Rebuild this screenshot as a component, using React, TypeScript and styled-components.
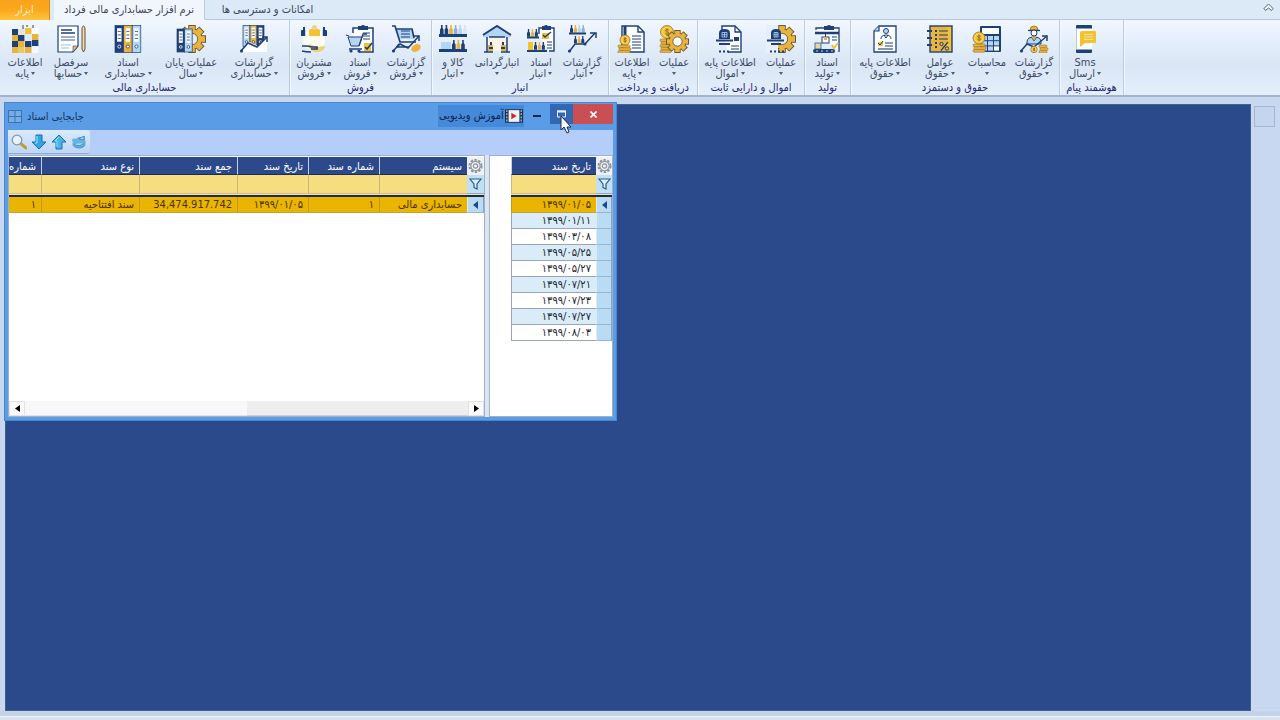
import React from 'react';
import styled, { createGlobalStyle } from 'styled-components';

const N = '#1f3f78';
const Y = '#e9b33c';
const G = '#f2c230';
const L = '#b4d6f5';
const W = '#fdfeff';

const GlobalStyle = createGlobalStyle`
  * { box-sizing: border-box; }
  body { margin: 0; }
  button, input { font: inherit; color: inherit; }
`;

const Page = styled.div`
  min-height: 100vh;
  display: flex;
  flex-direction: column;
  position: relative;
  overflow: hidden;
  background: #c8d8f0;
  font-family: 'DejaVu Sans Condensed', 'DejaVu Sans', sans-serif;
  font-size: 11px;
  line-height: 12px;
  color: #3a4b66;
`;

const TabStrip = styled.nav`
  height: 20px;
  display: flex;
  align-items: stretch;
  background: #dce9f7;
`;

const ToolsButton = styled.button`
  width: 50px;
  border: 0;
  border-right: 1px solid #d98a14;
  padding: 0;
  background: linear-gradient(#f9a31a, #fba81c 50%, #ffc53c);
  color: #fff1d2;
`;

const Tab = styled.button<{ $active?: boolean; $width: number }>`
  width: ${(p) => p.$width}px;
  margin-left: ${(p) => (p.$active ? 4 : 0)}px;
  border: 0;
  padding: 0;
  white-space: nowrap;
  color: #3b4660;
  background: ${(p) => (p.$active ? '#f1f6fd' : 'transparent')};
  border-right: 1px solid ${(p) => (p.$active ? '#b9cade' : 'transparent')};
  border-bottom: 1px solid ${(p) => (p.$active ? 'transparent' : '#b6c8dd')};
`;

const StripFill = styled.div`
  flex: 1;
  display: flex;
  justify-content: flex-end;
  align-items: flex-start;
  padding: 3px 6px 0 0;
  border-bottom: 1px solid #b6c8dd;
`;

const PlainButton = styled.button`
  border: 0;
  padding: 0;
  background: none;
  display: flex;
  align-items: center;
  justify-content: center;
`;

const Ribbon = styled.div`
  height: 77px;
  display: flex;
  align-items: stretch;
  background: linear-gradient(#f1f7fe, #e2edfa 35%, #dae6f5 60%, #e4effb);
  border-bottom: 2px solid #a4b4c9;
`;

const Group = styled.section<{ $width: number }>`
  width: ${(p) => p.$width}px;
  flex: none;
  display: flex;
  flex-direction: column;
  border-right: 1px solid #bccbdd;
  box-shadow: 1px 0 #f3f8fe;
`;

const GroupItems = styled.div<{ $inset: number }>`
  display: flex;
  padding: 5px 0 0 ${(p) => p.$inset}px;
  height: 62px;
`;

const GroupTitle = styled.h2`
  margin: 0;
  font-size: 11px;
  line-height: 12px;
  font-weight: 400;
  text-align: center;
  white-space: nowrap;
  color: #24227c;
`;

const Item = styled.button<{ $width: number }>`
  width: ${(p) => p.$width}px;
  flex: none;
  display: flex;
  flex-direction: column;
  align-items: center;
  justify-content: flex-start;
  border: 0;
  padding: 0;
  background: none;
  white-space: nowrap;
  line-height: 11px;
`;

const ItemIcon = styled.svg`
  width: 30px;
  height: 28px;
  margin-bottom: 4px;
`;

const SecondLine = styled.span`
  display: flex;
  align-items: center;
  height: 11px;
  gap: 2px;
`;

const Caret = styled.span`
  border: 2px solid transparent;
  border-top: 3px solid #4c5d78;
  border-bottom: 0;
`;

const Body = styled.main`
  flex: 1;
  display: flex;
  gap: 3px;
  padding: 7px 5px 0 5px;
  background: #c8d8f1;
`;

const Workspace = styled.div`
  flex: 1;
  background: #2b4a8c;
  border: 1px solid #43618f;
`;

const SideRail = styled.aside`
  width: 21px;
  padding-top: 2px;
`;

const RailButton = styled.button`
  width: 21px;
  height: 21px;
  border: 1px solid #a4b6d4;
  background: #c5d5f0;
  padding: 0;
  display: block;
`;

const StatusBar = styled.footer`
  height: 9px;
  border-top: 5px solid #c4d3e8;
  background: #d9e3ef;
  box-shadow: inset 0 1px #edf3fa;
`;

const Window = styled.section`
  position: absolute;
  left: 4px;
  top: 102px;
  width: 613px;
  border: 1px solid #4a86cf;
  padding: 1px 3px 3px;
  background: #5a9de6;
  color: #14284c;
`;

const TitleBar = styled.header`
  height: 26px;
  display: flex;
  align-items: flex-start;
`;

const WindowName = styled.h1`
  flex: 1;
  display: flex;
  align-items: center;
  gap: 5px;
  margin: 0;
  height: 26px;
  font-size: 11px;
  font-weight: 400;
  color: #16365f;
`;

const VideoButton = styled.button`
  height: 22px;
  width: 86px;
  display: flex;
  align-items: center;
  justify-content: space-between;
  border: 0;
  padding: 0 1px;
  margin-top: 1px;
  background: #4589da;
  color: #10214a;
  white-space: nowrap;
`;

const WindowButton = styled(PlainButton)<{ $width: number; $bg: string }>`
  width: ${(p) => p.$width}px;
  height: 20px;
  background: ${(p) => p.$bg};
`;

const ToolBar = styled.div`
  height: 25px;
  display: flex;
  background: #b5cdfa;
`;

const ToolButtons = styled.div`
  display: flex;
  height: 24px;
  align-items: center;
  padding: 0 1px;
  border-bottom: 1px solid #8fa9d0;
  border-radius: 0 3px 3px 0;
  background: linear-gradient(#dceafc, #bdd6f5);
`;

const ToolButton = styled(PlainButton)`
  width: 20px;
  height: 22px;
`;

const Panes = styled.div`
  display: flex;
  gap: 4px;
  height: 262px;
  background: #dde5f3;
`;

const Pane = styled.div<{ $width?: number }>`
  ${(p) => (p.$width ? `width: ${p.$width}px; flex: none;` : 'flex: 1; min-width: 0;')}
  display: flex;
  flex-direction: column;
  justify-content: space-between;
  overflow: hidden;
  padding-top: 1px;
  background: #fff;
  border: 1px solid #9fb0c8;
`;

const Table = styled.table<{ $width: number }>`
  width: ${(p) => p.$width}px;
  table-layout: fixed;
  border-collapse: separate;
  border-spacing: 0;
  color: #33280f;
`;

const Head = styled.th`
  height: 18px;
  padding: 2px 5px 0;
  background: #2c4a8b;
  color: #fff;
  font-weight: 400;
  text-align: start;
  white-space: nowrap;
  border-left: 1px solid #c3d0e8;
  border-bottom: 1px solid #1c2c55;
`;

const Corner = styled.td`
  height: 18px;
  padding: 0;
  background: #eef1f5;
  svg { display: block; margin: auto; }
`;

const FilterCell = styled.td`
  height: 19px;
  padding: 0;
  background: #f6dd80;
  border-left: 1px solid #c9b878;
  border-bottom: 1px solid #cdbf8c;
`;

const FilterInput = styled.input`
  display: block;
  width: 100%;
  height: 18px;
  border: 0;
  padding: 0 4px;
  background: transparent;
  outline: none;
`;

const FilterIcon = styled(Corner)`
  background: #bfe0f5;
  border-bottom: 1px solid #8eabc4;
`;

const Rule = styled.td`
  height: 3px;
  padding: 0;
  background: #232b3a;
  border-top: 1px solid #e9e2c4;
`;

const Cell = styled.td<{ $tone: 'sel' | 'alt' | 'plain' }>`
  height: 16px;
  padding: 1px 5px 0;
  line-height: 14px;
  text-align: start;
  white-space: nowrap;
  color: ${(p) => (p.$tone === 'sel' ? '#4a3000' : '#222833')};
  background: ${(p) => ({ sel: '#eab500', alt: '#d9ecf8', plain: '#ffffff' })[p.$tone]};
  border-left: 1px solid ${(p) => (p.$tone === 'sel' ? '#c09a1c' : '#9aa6b4')};
  border-bottom: 1px solid ${(p) => (p.$tone === 'sel' ? '#c4a040' : '#9aa6b4')};
`;

const Marker = styled.td`
  padding: 0;
  background: #b9dbf3;
  border-left: 1px solid #d9ecf8;
  border-bottom: 1px solid #9ab4cb;
  border-right: 1px solid #8ba0bb;
  svg { display: block; margin: auto; }
`;

const ScrollBar = styled.div`
  height: 15px;
  display: flex;
  background: #eeeeee;
`;

const ScrollArrow = styled(PlainButton)`
  width: 16px;
  background: #fafafa;
  border: 1px solid #e2e2e2;
`;

const Thumb = styled.div`
  flex: 1;
  background: #f8f8fa;
  border-bottom: 1px solid #e2e2e6;
`;

const Track = styled.div`
  flex: 1;
  border-bottom: 1px solid #d0d0d0;
`;

const Pointer = styled.svg`
  position: absolute;
  left: 560px;
  top: 115px;
  width: 12px;
  height: 19px;
`;

const Gear = ({ x, y, r, hole = W }: { x: number; y: number; r: number; hole?: string }) => (
  <g transform={`translate(${x} ${y})`}>
    <g fill={Y} stroke="#6a5a34" strokeWidth="1">
      {[0, 45, 90, 135].map((a) => (
        <rect key={a} x={-r * 0.24} y={-r} width={r * 0.48} height={r * 2} transform={`rotate(${a})`} />
      ))}
      <circle r={r * 0.76} />
    </g>
    {[0, 45, 90, 135].map((a) => (
      <rect key={a} x={-r * 0.2} y={-r * 0.9} width={r * 0.4} height={r * 1.8} fill={Y} transform={`rotate(${a})`} />
    ))}
    <circle r={r * 0.42} fill={hole} stroke="#5b5136" strokeWidth=".8" />
  </g>
);

const Binder = ({ x, y, w, h, c, tag = W }: { x: number; y: number; w: number; h: number; c: string; tag?: string }) => (
  <g>
    <rect x={x} y={y} width={w} height={h} fill={c} stroke={N} strokeWidth=".7" />
    <rect x={x + w * 0.24} y={y + h * 0.1} width={w * 0.52} height={h * 0.5} fill={tag} />
    <path d={`M${x + w * 0.32} ${y + h * 0.22}h${w * 0.36}M${x + w * 0.32} ${y + h * 0.35}h${w * 0.36}M${x + w * 0.32} ${y + h * 0.48}h${w * 0.36}`} stroke={N} strokeWidth=".8" />
    <circle cx={x + w / 2} cy={y + h * 0.78} r={w * 0.18} fill={c === N ? N : W} stroke={c === N ? W : N} strokeWidth=".8" />
  </g>
);

const Coin = ({ x, y, r }: { x: number; y: number; r: number }) => (
  <g>
    <circle cx={x} cy={y} r={r} fill={G} stroke="#95722a" strokeWidth=".8" />
    <circle cx={x} cy={y} r={r * 0.68} fill="none" stroke="#fae193" strokeWidth=".7" />
    <path d={`M${x + r * 0.28} ${y - r * 0.3}q${-r * 0.55} ${-r * 0.25} ${-r * 0.5} ${r * 0.12}q${r * 0.5} ${r * 0.15} ${r * 0.5} ${r * 0.38}q${-r * 0.3} ${r * 0.3} ${-r * 0.55} 0M${x} ${y - r * 0.6}v${r * 1.2}`} fill="none" stroke="#8a6a20" strokeWidth=".8" />
  </g>
);

const Stack = ({ x, y, w, n }: { x: number; y: number; w: number; n: number }) => (
  <g>
    {Array.from({ length: n }, (_, i) => (
      <rect key={i} x={x + (i % 2)} y={y + i * 2.8} width={w} height="2.6" rx="1.1" fill={Y} stroke="#977228" strokeWidth=".6" />
    ))}
  </g>
);

const Bottles = ({ x, y, colors, s = 1 }: { x: number; y: number; colors: string[]; s?: number }) => (
  <g>
    {colors.map((c, i) => (
      <path key={i} d={`M${x + i * 4.6 * s + 1 * s} ${y}h${1.6 * s}v${3 * s}l${1 * s} ${1.6 * s}v${4.4 * s}h${-3.6 * s}v${-4.4 * s}l${1 * s} ${-1.6 * s}z`} fill={c} />
    ))}
  </g>
);

const Trend = ({ d, tip }: { d: string; tip: string }) => (
  <g fill="none" stroke={N} strokeWidth="1.5">
    <path d={d} />
    <path d={tip} />
  </g>
);

const Lines = ({ x, y, w, n, gap = 3, c = N }: { x: number; y: number; w: number; n: number; gap?: number; c?: string }) => (
  <path d={Array.from({ length: n }, (_, i) => `M${x} ${y + i * gap}h${w}`).join('')} stroke={c} strokeWidth="1.1" fill="none" />
);

const ICONS: Record<string, React.ReactNode> = {
  baseInfo: (
    <g>
      {[
        [2, 4, N], [8, 4, '#e5e4dc'], [15, 3, G], [22, 3, W],
        [2, 10, Y], [8, 10, N], [15, 9, '#dfeaf5'], [22, 9, Y],
        [2, 16, N], [8, 16, Y], [15, 16, N], [22, 15, N],
        [2, 22, Y], [8, 22, '#e7c766'], [15, 22, Y], [22, 22, '#f6f9fc'],
      ].map(([x, y, c], i) => <rect key={i} x={x as number} y={y as number} width="6.4" height="6" fill={c as string} />)}
      <path d="M13 0v4M17 0v2M23 0v3" stroke={N} />
    </g>
  ),
  accounts: (
    <g>
      <path d="M2 1h20v20l-5 6H2z" fill={W} stroke={N} strokeWidth="1.2" />
      <path d="M22 21l-5 6v-6z" fill={G} stroke={N} strokeWidth=".6" />
      <path d="M5 5h11M5 8h14" stroke={N} strokeWidth="1.7" />
      <Lines x={5} y={12} w={14} n={2} gap={3} c="#4b6186" />
      <path d="M5 20h10M5 23h8" stroke={L} strokeWidth="1.3" />
      <path d="M26 4c0-4 3-4 3 0v20l-1.5 3L26 24z" fill="#e8dcb8" stroke="#68532b" strokeWidth="1" />
    </g>
  ),
  accDocs: (
    <g>
      <Binder x={2} y={0.5} w={8.6} h={27} c={N} />
      <Binder x={10.6} y={0.5} w={8.6} h={27} c={Y} />
      <Binder x={19.2} y={0.5} w={8.6} h={27} c={L} />
    </g>
  ),
  yearEnd: (
    <g>
      <Gear x={16} y={14} r={13.5} hole="#e3eefa" />
      <Binder x={1} y={4} w={7.6} h={23} c={N} />
      <Binder x={8.6} y={4} w={7.6} h={23} c={L} />
    </g>
  ),
  accReports: (
    <g>
      <Binder x={4} y={0.5} w={7} h={21} c={L} />
      <Binder x={11} y={0.5} w={7} h={21} c={Y} />
      <Binder x={18} y={0.5} w={7} h={21} c={N} />
      <path d="M2 27L10 17l9 4 9-9v15z" fill={W} />
      <Trend d="M2 26l7-8 9 4 10-10" tip="M23 12h5v5" />
      <circle cx="2.5" cy="26" r="1.6" fill={N} />
    </g>
  ),
  customers: (
    <g>
      <circle cx="15" cy="15" r="11" fill="#fdfbf2" />
      <path d="M2 11V6q0-1 1-1h1V2h2v9zM28 11V6q0-1-1-1h-1V2h-2v9z" fill={N} />
      <path d="M6 5h1v6H6zM23 5h1v6h-1z" fill={L} />
      <path d="M10 11V6q0-2 2-2h7q2 0 2 2v5z" fill={G} />
      <circle cx="15.500" cy="2.500" r="2.500" fill="#f3d27c" />
      <path d="M10 19c0 6 3 8 8 8s8-3 8-6l-8 1z" fill="#f0cf70" />
      <path d="M3 21h5l5 1h5v2h-6M3 26c4 1 6 1 9 1" stroke={N} strokeWidth="1.700" fill="none" />
    </g>
  ),
  salesDocs: (
    <g>
      <path d="M8 8V3h20v24H14" fill={W} stroke={N} strokeWidth="1.500" />
      <path d="M13 1h3q2-2 4 0h3v4H13z" fill={N} />
      <path d="M3 12h14l-3 9H6z" fill={L} stroke={N} />
      <path d="M1 10l3 1M14 21l4-12h4M4 24h13" stroke={N} strokeWidth="1.300" fill="none" />
      <Lines x={18} y={8} w={7} n={3} />
      <circle cx="6" cy="26" r="1.600" fill={N} /><circle cx="14" cy="26" r="1.600" fill={N} />
      <rect x="19" y="18" width="7" height="8" fill={G} />
      <path d="M20 22l2 2 5-6" stroke={N} strokeWidth="1.600" fill="none" />
    </g>
  ),
  salesReports: (
    <g>
      <path d="M4 4h17l3 10H8z" fill={L} />
      <path d="M1 1h3l5 16h16M5 4h16l2 9M8 19l-2 3h12" stroke={N} strokeWidth="1.700" fill="none" />
      <Lines x={10} y={6} w={9} n={3} />
      <ellipse cx="25" cy="23" rx="5" ry="3.500" fill={Y} transform="rotate(-30 25 23)" />
      <Trend d="M2 26l7-7 8 4 11-12" tip="M23 11h5v5" />
      <circle cx="2.500" cy="26" r="1.600" fill={N} />
    </g>
  ),
  goods: (
    <g>
      <Bottles x={2} y={0} colors={[N, N, Y, '#8fb0d4', L, '#d5e6f5']} />
      <rect x="1" y="9" width="28" height="3" fill={N} />
      <rect x="3" y="17" width="10" height="7" fill={L} />
      <Bottles x={14} y={15} colors={[N, Y, N]} />
      <rect x="1" y="24" width="28" height="3" fill={N} />
    </g>
  ),
  stockTake: (
    <g>
      <path d="M6 11V26h18V11z" fill="#f7f4e6" />
      <path d="M1 10L15 1l14 9v2H1z" fill={L} />
      <path d="M1 10L15 1l14 9" fill="none" stroke={N} strokeWidth="2" />
      <path d="M5 12V27M25 12V27M2 27h9M19 27h9" stroke={N} strokeWidth="1.500" />
      <path d="M7 12h16" stroke={N} strokeWidth="1.500" />
      <rect x="6" y="20" width="5" height="6" fill={Y} /><rect x="19" y="20" width="5" height="6" fill={Y} />
      <path d="M9 17v3M21 17v3M7 23h4M19 23h4" stroke={N} strokeWidth="2" />
    </g>
  ),
  stockDocs: (
    <g>
      <path d="M13 9V3h15v23h-5" fill={W} stroke={N} strokeWidth="1.400" />
      <path d="M16 1h2q2-2 4 0h3v4h-9z" fill={N} />
      <Bottles x={1} y={4} colors={[N, Y, N]} s={0.85} />
      <path d="M1 12.500h12M1 26h20" stroke={N} strokeWidth="2" />
      <rect x="2" y="17" width="5" height="8" fill={G} />
      <Bottles x={8} y={17} colors={[N, Y, N]} s={0.85} />
      <rect x="16" y="8" width="7" height="6" fill={G} /><path d="M17 10l2 2 6-5" stroke={N} fill="none" strokeWidth="1.400" />
      <Lines x={21} y={17} w={5} n={3} />
    </g>
  ),
  stockReports: (
    <g>
      <Bottles x={3} y={0} colors={[N, Y, L, '#8fb0d4']} s={0.85} />
      <path d="M2 8.500h17" stroke={N} strokeWidth="2" />
      <Bottles x={7} y={11} colors={[N, Y, N]} s={0.8} />
      <Trend d="M2 27l6-8h10l10-11" tip="M23 8h6v5" />
      <circle cx="2.500" cy="26" r="1.600" fill={N} />
      <circle cx="18" cy="19" r="1.500" fill={N} />
    </g>
  ),
  payBase: (
    <g>
      <path d="M5 1h16l6 6v20H5z" fill={W} stroke={N} strokeWidth="1.400" />
      <path d="M21 1v6h6" fill="none" stroke={N} strokeWidth="1.400" />
      <path d="M8 1v12" stroke={N} strokeWidth="3" />
      <Lines x={15} y={11} w={9} n={5} />
      <Stack x={1} y={20} w={12} n={3} />
      <Coin x={8} y={15} r={5} />
    </g>
  ),
  payOps: (
    <g>
      <Stack x={1} y={14} w={11} n={5} />
      <Coin x={8} y={7} r={6.500} />
      <Gear x={18.5} y={16.5} r={11} />
    </g>
  ),
  assetBase: (
    <g>
      <path d="M7 6V1h13l6 6v20H13" fill={W} stroke={N} strokeWidth="1.400" />
      <path d="M20 1v6h6" fill="none" stroke={N} strokeWidth="1.300" />
      <path d="M4 14V8q0-4 5.500-4T15 8v6z" fill={N} />
      <path d="M7 7.500h5v4.500H7zM9.500 7.500v4.500M7 9.700h5" stroke={L} strokeWidth=".8" fill="none" />
      <path d="M1 15.500h17M4 19h11" stroke={N} strokeWidth="2.200" />
      <rect x="19" y="12" width="5" height="4" fill={N} />
      <Lines x={16} y={21} w={8} n={2} />
      <path d="M4 26.500h2M8 26.500h2M12 26.500h2" stroke={N} strokeWidth="2" />
    </g>
  ),
  assetOps: (
    <g>
      <Gear x={16} y={14} r={13.500} hole="#e3eefa" />
      <rect x="0" y="0" width="12" height="28" fill="#e6f0fb" />
      <path d="M5 14V8q0-4 5-4t5 4v6z" fill={N} />
      <path d="M8 7.500h4v4.500H8zM10 7.500v4.500M8 9.700h4" stroke={L} strokeWidth=".8" fill="none" />
      <path d="M1 15.500h17M5 19h10" stroke={N} strokeWidth="2.200" />
      <path d="M4 26.500h2M8 26.500h2M12 26.500h2M16 26.500h2" stroke={N} strokeWidth="2" />
    </g>
  ),
  production: (
    <g>
      <path d="M4 5V3h23v24" fill={W} stroke={N} strokeWidth="1.300" />
      <path d="M12 1h3q2-2 4 0h3v4H12z" fill={N} />
      <path d="M3 8h24" stroke={N} strokeWidth="2.500" /><path d="M13.500 9v3" stroke={N} />
      <rect x="10" y="12" width="7" height="6" fill={W} stroke={N} />
      <rect x="12" y="12" width="3" height="3" fill={Y} />
      <rect x="3" y="18" width="6" height="6" fill="#e6d7a8" stroke={N} strokeWidth=".700" />
      <rect x="1" y="24" width="22" height="4" rx="2" fill={N} />
      <path d="M4 26h2M9 26h2M14 26h2M19 26h2" stroke={L} />
      <Lines x={20} y={12} w={5} n={2} />
      <path d="M20 20l2 3 4-5" stroke={G} strokeWidth="2" fill="none" />
    </g>
  ),
  salaryBase: (
    <g>
      <path d="M9 1h17v26H4V6z" fill={W} stroke={N} strokeWidth="1.300" />
      <path d="M9 1v5H4" fill={L} stroke={N} strokeWidth="1.200" />
      <circle cx="16" cy="6" r="2.500" fill={L} stroke={N} />
      <path d="M11 14q0-4 5-4t5 4M14 10l2 3 2-3" fill="none" stroke={N} />
      <rect x="8" y="17" width="5" height="4" fill={G} /><path d="M8 18l2 2 3-4" fill="none" stroke={N} />
      <Lines x={15} y={18} w={8} n={2} /><Lines x={8} y={24} w={15} n={1} />
    </g>
  ),
  factors: (
    <g>
      <rect x="5" y="1" width="22" height="26" fill={Y} stroke={N} strokeWidth="1.400" />
      <rect x="22" y="2" width="4" height="24" fill={G} />
      <path d="M2 6h5M2 13h5M2 20h5" stroke={N} strokeWidth="2.200" />
      <path d="M10 6h2M10 10h2M10 14h2M10 18h2M10 22h2" stroke={N} strokeWidth="2" />
      <path d="M14 6h9M14 10h9M14 14h9" stroke={N} strokeWidth="1.200" />
      <circle cx="16.500" cy="19" r="1.700" fill="none" stroke={N} /><circle cx="22" cy="23.500" r="1.700" fill="none" stroke={N} />
      <path d="M23 17l-7 8.500" stroke={N} strokeWidth="1.200" />
    </g>
  ),
  calc: (
    <g>
      <rect x="8" y="1" width="21" height="26" rx="1" fill={N} />
      <rect x="10" y="3" width="17" height="6" fill={W} />
      {[0, 1, 2].map((r) => [0, 1, 2].map((c) => (
        <rect key={`${r}${c}`} x={10 + c * 6} y={11 + r * 5.200} width="5" height="4.200" fill={c === 2 && r === 2 ? W : L} />
      )))}
      <Stack x={1} y={19} w={12} n={3} />
      <Coin x={7} y={13} r={6} />
    </g>
  ),
  salaryReports: (
    <g>
      <path d="M11 5q0-4 4-4t4 4z" fill={Y} stroke="#836625" strokeWidth=".7" />
      <path d="M9 5.500h12" stroke={N} strokeWidth="1.300" />
      <circle cx="15" cy="8" r="3" fill={W} stroke={N} />
      <path d="M8 17q0-5 7-5t7 5v2H8z" fill={L} stroke={N} />
      <path d="M12 12l3 4 3-4" fill={Y} stroke={N} strokeWidth=".7" />
      <Trend d="M2 26l6-7 7 3 13-11" tip="M23 11h5v5" />
      <circle cx="2.500" cy="26" r="1.600" fill={N} />
      <Coin x={15} y={24.500} r={3.200} />
      <Stack x={20} y={20} w={8} n={3} />
    </g>
  ),
  sms: (
    <g>
      <rect x="6" y="0" width="16" height="28" rx="1.500" fill={W} />
      <path d="M6 3.500V1q0-1 1-1h14q1 0 1 1v2.500zM6 24.500h16V27q0 1-1 1H7q-1 0-1-1z" fill={N} />
      <path d="M6.500 4v20" stroke="#b9c9de" />
      <path d="M12 6h13q1 0 1 1v10q0 1-1 1H15l-5 4V8q0-2 2-2z" fill={G} />
      <path d="M14 9.500h9M14 12h9M14 14.500h9" stroke="#fae39b" />
    </g>
  ),
};

type ItemData = { icon: string; line1: string; line2?: string; w: number };
type GroupData = { title: string; w: number; inset: number; items: ItemData[] };

const GROUPS: GroupData[] = [
  { title: 'حسابداری مالی', w: 290, inset: 2, items: [
    { icon: 'baseInfo', line1: 'اطلاعات', line2: 'پایه', w: 46 },
    { icon: 'accounts', line1: 'سرفصل', line2: 'حسابها', w: 46 },
    { icon: 'accDocs', line1: 'اسناد', line2: 'حسابداری', w: 68 },
    { icon: 'yearEnd', line1: 'عملیات پایان', line2: 'سال', w: 58 },
    { icon: 'accReports', line1: 'گزارشات', line2: 'حسابداری', w: 68 },
  ] },
  { title: 'فروش', w: 142, inset: 1, items: [
    { icon: 'customers', line1: 'مشتریان', line2: 'فروش', w: 46 },
    { icon: 'salesDocs', line1: 'اسناد', line2: 'فروش', w: 46 },
    { icon: 'salesReports', line1: 'گزارشات', line2: 'فروش', w: 46 },
  ] },
  { title: 'انبار', w: 177, inset: 1, items: [
    { icon: 'goods', line1: 'کالا و', line2: 'انبار', w: 40 },
    { icon: 'stockTake', line1: 'انبارگردانی', w: 48 },
    { icon: 'stockDocs', line1: 'اسناد', line2: 'انبار', w: 40 },
    { icon: 'stockReports', line1: 'گزارشات', line2: 'انبار', w: 42 },
  ] },
  { title: 'دریافت و پرداخت', w: 89, inset: 2, items: [
    { icon: 'payBase', line1: 'اطلاعات', line2: 'پایه', w: 42 },
    { icon: 'payOps', line1: 'عملیات', w: 42 },
  ] },
  { title: 'اموال و دارایی ثابت', w: 107, inset: 2, items: [
    { icon: 'assetBase', line1: 'اطلاعات پایه', line2: 'اموال', w: 60 },
    { icon: 'assetOps', line1: 'عملیات', w: 42 },
  ] },
  { title: 'تولید', w: 46, inset: 1, items: [
    { icon: 'production', line1: 'اسناد', line2: 'تولید', w: 42 },
  ] },
  { title: 'حقوق و دستمزد', w: 209, inset: 3, items: [
    { icon: 'salaryBase', line1: 'اطلاعات پایه', line2: 'حقوق', w: 62 },
    { icon: 'factors', line1: 'عوامل', line2: 'حقوق', w: 48 },
    { icon: 'calc', line1: 'محاسبات', w: 46 },
    { icon: 'salaryReports', line1: 'گزارشات', line2: 'حقوق', w: 48 },
  ] },
  { title: 'هوشمند پیام', w: 64, inset: 2, items: [
    { icon: 'sms', line1: 'Sms', line2: 'ارسال', w: 46 },
  ] },
];

const DATES = ['۱۳۹۹/۰۱/۰۵', '۱۳۹۹/۰۱/۱۱', '۱۳۹۹/۰۳/۰۸', '۱۳۹۹/۰۵/۲۵', '۱۳۹۹/۰۵/۲۷', '۱۳۹۹/۰۷/۲۱', '۱۳۹۹/۰۷/۲۳', '۱۳۹۹/۰۷/۲۷', '۱۳۹۹/۰۸/۰۳'];

const COLUMNS = [
  { name: 'سیستم', w: 88, value: 'حسابداری مالی' },
  { name: 'شماره سند', w: 71, value: '۱' },
  { name: 'تاریخ سند', w: 71, value: '۱۳۹۹/۰۱/۰۵' },
  { name: 'جمع سند', w: 98, value: '34,474.917.742' },
  { name: 'نوع سند', w: 98, value: 'سند افتتاحیه' },
  { name: 'شماره', w: 71, value: '۱' },
];

const GearOutline = () => (
  <svg width="15" height="16" viewBox="0 0 16 16" fill="none" stroke="#8c9097" strokeWidth="1.2">
    <circle cx="8" cy="8" r="6.500" strokeDasharray="2.600 1.500" strokeWidth="2" />
    <circle cx="8" cy="8" r="5" /><circle cx="8" cy="8" r="2.300" />
  </svg>
);

const Funnel = () => (
  <svg width="13" height="12" viewBox="0 0 13 12">
    <path d="M1 1h11L8 6v5L5 9.500V6z" fill="#dff1fb" stroke="#2b5a84" strokeWidth="1.200" />
  </svg>
);

const RowArrow = () => (
  <svg width="5" height="8" viewBox="0 0 5 8"><path d="M5 0v8L0 4z" fill="#1b4a86" /></svg>
);

const BlueArrow = ({ up }: { up?: boolean }) => (
  <svg width="16" height="16" viewBox="0 0 16 16">
    <path d={up ? 'M8 1l7 7h-4v7H5V8H1z' : 'M8 15L1 8h4V1h6v7h4z'} fill={up ? '#45b4e8' : '#30a5e6'} stroke="#1d6fb0" strokeLinejoin="round" />
    <path d={up ? 'M8 3L4 7h2v6' : 'M6 2v7H4'} fill="none" stroke="#a5e3fb" />
  </svg>
);

export default function App() {
  return (
    <Page>
      <GlobalStyle />
      <TabStrip dir="ltr">
        <ToolsButton>ابزار</ToolsButton>
        <Tab $active $width={151}>نرم افزار حسابداری مالی فرداد</Tab>
        <Tab $width={126}>امکانات و دسترسی ها</Tab>
        <StripFill>
          <PlainButton aria-label="Collapse ribbon">
            <svg width="11" height="9" viewBox="0 0 11 9" fill="#f7fafe" stroke="#55627a">
              <path d="M5.500 1L10 5.500 8.500 7.500 5.500 5 2.500 7.500 1 5.500z" />
            </svg>
          </PlainButton>
        </StripFill>
      </TabStrip>

      <Ribbon>
        {GROUPS.map((g) => (
          <Group key={g.title} $width={g.w}>
            <GroupItems $inset={g.inset}>
              {g.items.map((it) => (
                <Item key={it.icon} $width={it.w}>
                  <ItemIcon viewBox="0 0 30 28" aria-hidden>{ICONS[it.icon]}</ItemIcon>
                  <span>{it.line1}</span>
                  <SecondLine>
                    {it.line2 && <span>{it.line2}</span>}
                    <Caret />
                  </SecondLine>
                </Item>
              ))}
            </GroupItems>
            <GroupTitle dir="rtl">{g.title}</GroupTitle>
          </Group>
        ))}
      </Ribbon>

      <Body>
        <Workspace />
        <SideRail><RailButton aria-label="Panel" /></SideRail>
      </Body>
      <StatusBar />

      <Window>
        <TitleBar>
          <WindowName>
            <svg width="14" height="14" viewBox="0 0 14 14" fill="#76ade6" stroke="#3a73b3">
              <path d="M.5.500h13v12H.5zM.5 6.500h13M7 .500v12" />
            </svg>
            <span dir="rtl">جابجایی اسناد</span>
          </WindowName>
          <VideoButton>
            <span dir="rtl">آموزش ویدیویی</span>
            <svg width="18" height="14" viewBox="0 0 20 15">
              <rect width="20" height="15" fill="#20354c" />
              <rect x="4" y="1" width="12" height="13" fill="#eef2f5" />
              <path d="M2 1v13M18 1v13" stroke="#9db3c8" strokeWidth="1.500" strokeDasharray="2 1.500" />
              <path d="M7 4l6 3.500L7 11z" fill="#cf2334" />
            </svg>
          </VideoButton>
          <WindowButton $width={26} $bg="transparent" aria-label="Minimize">
            <svg width="8" height="8" viewBox="0 0 8 8"><path d="M0 6h8" stroke="#12294d" strokeWidth="2" /></svg>
          </WindowButton>
          <WindowButton $width={23} $bg="#3167b5" aria-label="Maximize">
            <svg width="9" height="8" viewBox="0 0 9 8"><path d="M.5 1h8v6h-8z" fill="none" stroke="#e9f1fb" /><path d="M0 1.500h9" stroke="#e9f1fb" strokeWidth="2" /></svg>
          </WindowButton>
          <WindowButton $width={40} $bg="#c94f52" aria-label="Close">
            <svg width="7" height="7" viewBox="0 0 7 7"><path d="M.5.500l6 6M6.500.500l-6 6" stroke="#fff" strokeWidth="1.600" /></svg>
          </WindowButton>
        </TitleBar>

        <ToolBar>
          <ToolButtons>
            <ToolButton aria-label="Search">
              <svg width="16" height="16" viewBox="0 0 16 16">
                <path d="M9 9l6 5" stroke="#c99a3a" strokeWidth="3" strokeLinecap="round" />
                <circle cx="6" cy="6" r="4.800" fill="#e4f3fc" stroke="#8795a5" strokeWidth="1.300" />
              </svg>
            </ToolButton>
            <ToolButton aria-label="Move down"><BlueArrow /></ToolButton>
            <ToolButton aria-label="Move up"><BlueArrow up /></ToolButton>
            <ToolButton aria-label="Refresh">
              <svg width="16" height="16" viewBox="0 0 16 16">
                <ellipse cx="8" cy="10" rx="6.500" ry="4.500" fill="#4f9fd6" />
                <path d="M1 6q1-3 4-1 2-3 5-2l4-1v4l1 2-3 4q-5 2-9 0z" fill="#69b3e3" />
                <path d="M3 10q5 4 10-1M8 5l5-3v4z" fill="#a9d8f4" stroke="#357fb6" strokeWidth=".800" />
              </svg>
            </ToolButton>
          </ToolButtons>
        </ToolBar>

        <Panes>
          <Pane dir="rtl">
            <Table $width={514}>
              <colgroup>
                <col style={{ width: 17 }} />
                {COLUMNS.map((c, i) => <col key={i} style={{ width: c.w }} />)}
              </colgroup>
              <thead>
                <tr>
                  <Corner><GearOutline /></Corner>
                  {COLUMNS.map((c, i) => <Head key={i}>{c.name}</Head>)}
                </tr>
              </thead>
              <tbody>
                <tr>
                  <FilterIcon><Funnel /></FilterIcon>
                  {COLUMNS.map((c, i) => <FilterCell key={i}><FilterInput aria-label={c.name} /></FilterCell>)}
                </tr>
                <tr><Rule colSpan={7} /></tr>
                <tr>
                  <Marker><RowArrow /></Marker>
                  {COLUMNS.map((c, i) => <Cell key={i} $tone="sel">{c.value}</Cell>)}
                </tr>
              </tbody>
            </Table>
            <ScrollBar dir="ltr">
              <ScrollArrow aria-label="Scroll left"><svg width="5" height="7" viewBox="0 0 5 7"><path d="M5 0v7L0 3.500z" /></svg></ScrollArrow>
              <Thumb />
              <Track />
              <ScrollArrow aria-label="Scroll right"><svg width="5" height="7" viewBox="0 0 5 7"><path d="M0 0v7l5-3.500z" /></svg></ScrollArrow>
            </ScrollBar>
          </Pane>

          <Pane $width={124} dir="rtl">
            <Table $width={101}>
              <colgroup>
                <col style={{ width: 16 }} />
                <col style={{ width: 85 }} />
              </colgroup>
              <thead>
                <tr><Corner><GearOutline /></Corner><Head>تاریخ سند</Head></tr>
              </thead>
              <tbody>
                <tr>
                  <FilterIcon><Funnel /></FilterIcon>
                  <FilterCell><FilterInput aria-label="تاریخ سند" /></FilterCell>
                </tr>
                <tr><Rule colSpan={2} /></tr>
                {DATES.map((d, i) => (
                  <tr key={d}>
                    <Marker>{i === 0 && <RowArrow />}</Marker>
                    <Cell $tone={i === 0 ? 'sel' : i % 2 ? 'alt' : 'plain'}>{d}</Cell>
                  </tr>
                ))}
              </tbody>
            </Table>
          </Pane>
        </Panes>
      </Window>

      <Pointer viewBox="0 0 12 19" aria-hidden>
        <path d="M1 1v14l3-3 3 6 2-1-2-5h4z" fill="#fff" stroke="#1c2b48" strokeLinejoin="round" />
      </Pointer>
    </Page>
  );
}
